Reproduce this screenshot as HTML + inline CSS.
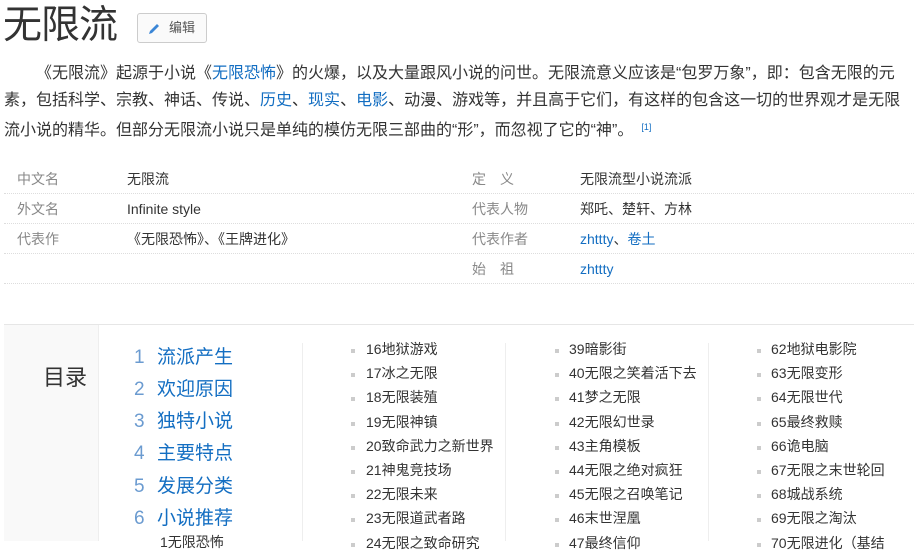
<!DOCTYPE html>
<html><head><meta charset="utf-8"><style>
*{margin:0;padding:0;box-sizing:border-box}
body{width:914px;height:541px;overflow:hidden;background:#fff;font-family:"Liberation Sans","Noto Sans CJK SC",sans-serif;color:#333;position:relative}
.a{position:absolute;white-space:nowrap;line-height:1.2}
h1{position:absolute;left:3px;top:2px;font-size:39px;font-weight:normal;color:#333;letter-spacing:-1px;line-height:48px}
.btn{position:absolute;left:137px;top:13px;width:70px;height:30px;border:1px solid #ccc;border-radius:3px;background:#fafafa;font-size:13px;color:#555}
p{position:absolute;left:4px;top:60px;width:906px;font-size:16px;line-height:27px;text-indent:32px;color:#333}
a{color:#136ec2;text-decoration:none}
sup{font-size:9px;color:#136ec2;vertical-align:5px;margin-left:8px}
.l{font-size:14px;color:#888}
.v{font-size:14px;color:#333}
.hr{position:absolute;height:0;border-top:1px dotted #ddd}
.toc{position:absolute;left:4px;top:324px;width:910px;height:217px;border-top:1px solid #e6e6e6}
.side{position:absolute;left:4px;top:325px;width:95px;height:216px;background:#f9f9f9;border-right:1px solid #eee}
.n{font-size:19px;color:#6b9bd0;line-height:24px}
.t{font-size:19px;color:#136ec2;line-height:24px}
.i{font-size:14px;color:#333}
.b{position:absolute;width:4px;height:4px;background:#ccc}
.vd{position:absolute;width:1px;background:#eee;top:343px;height:198px}
</style></head><body>
<h1>无限流</h1>
<div class="btn"><svg style="position:absolute;left:9px;top:8px" width="14" height="14" viewBox="0 0 14 14"><path d="M2 12l1-3 7-7 2 2-7 7z" fill="#3b86d6"/></svg><span class="a" style="left:31px;top:6px">编辑</span></div>
<p>《无限流》起源于小说《<a>无限恐怖</a>》的火爆，以及大量跟风小说的问世。无限流意义应该是“包罗万象”，即：包含无限的元素，包括科学、宗教、神话、传说、<a>历史</a>、<a>现实</a>、<a>电影</a>、动漫、游戏等，并且高于它们，有这样的包含这一切的世界观才是无限流小说的精华。但部分无限流小说只是单纯的模仿无限三部曲的“形”，而忽视了它的“神”。<sup>[1]</sup></p>

<div class="a l" style="left:17px;top:171px">中文名</div><div class="a v" style="left:127px;top:171px">无限流</div>
<div class="a l" style="left:17px;top:201px">外文名</div><div class="a v" style="left:127px;top:201px">Infinite style</div>
<div class="a l" style="left:17px;top:231px">代表作</div><div class="a v" style="left:127px;top:231px">《无限恐怖》、《王牌进化》</div>
<div class="a l" style="left:472px;top:171px">定　义</div><div class="a v" style="left:580px;top:171px">无限流型小说流派</div>
<div class="a l" style="left:472px;top:201px">代表人物</div><div class="a v" style="left:580px;top:201px">郑吒、楚轩、方林</div>
<div class="a l" style="left:472px;top:231px">代表作者</div><div class="a v" style="left:580px;top:231px"><a>zhttty</a>、<a>卷土</a></div>
<div class="a l" style="left:472px;top:261px">始　祖</div><div class="a v" style="left:580px;top:261px"><a>zhttty</a></div>
<div class="hr" style="left:4px;width:910px;top:193px"></div><div class="hr" style="left:4px;width:910px;top:223px"></div><div class="hr" style="left:4px;width:910px;top:253px"></div><div class="hr" style="left:4px;width:910px;top:283px"></div>

<div class="toc"></div><div class="side"></div>
<div class="a" style="left:43px;top:365px;font-size:22px;color:#333">目录</div>
<div class="a n" style="left:134px;top:346px">1</div><div class="a t" style="left:157px;top:346px">流派产生</div>
<div class="a n" style="left:134px;top:378px">2</div><div class="a t" style="left:157px;top:378px">欢迎原因</div>
<div class="a n" style="left:134px;top:410px">3</div><div class="a t" style="left:157px;top:410px">独特小说</div>
<div class="a n" style="left:134px;top:442px">4</div><div class="a t" style="left:157px;top:442px">主要特点</div>
<div class="a n" style="left:134px;top:475px">5</div><div class="a t" style="left:157px;top:475px">发展分类</div>
<div class="a n" style="left:134px;top:507px">6</div><div class="a t" style="left:157px;top:507px">小说推荐</div>
<div class="a" style="left:160px;top:534px;font-size:14px;color:#333">1无限恐怖</div>
<div class="vd" style="left:302px"></div><div class="vd" style="left:505px"></div><div class="vd" style="left:708px"></div>
<div id="c"></div>
<script>
var cols=[[351,366,["16地狱游戏","17冰之无限","18无限装殖","19无限神镇","20致命武力之新世界","21神鬼竞技场","22无限未来","23无限道武者路","24无限之致命研究"]],
[555,569,["39暗影街","40无限之笑着活下去","41梦之无限","42无限幻世录","43主角模板","44无限之绝对疯狂","45无限之召唤笔记","46末世涅凰","47最终信仰"]],
[757,771,["62地狱电影院","63无限变形","64无限世代","65最终救赎","66诡电脑","67无限之末世轮回","68城战系统","69无限之淘汰","70无限进化（基结"]]];
var h="";cols.forEach(function(c){c[2].forEach(function(s,k){var y=341+k*24.2;h+='<div class="b" style="left:'+c[0]+'px;top:'+(y+8)+'px"></div><div class="a i" style="left:'+c[1]+'px;top:'+y+'px">'+s+'</div>';});});
document.getElementById("c").innerHTML=h;
</script>
</body></html>
